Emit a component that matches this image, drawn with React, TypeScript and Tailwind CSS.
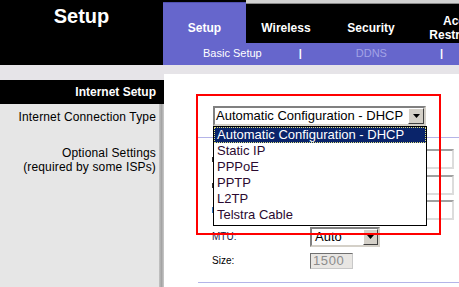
import React from 'react';

const options = ['Automatic Configuration - DHCP', 'Static IP', 'PPPoE', 'PPTP', 'L2TP', 'Telstra Cable'];

function DropArrow({ w = 'w-[16px]' }: { w?: string }) {
  return (
    <div className={`flex ${w} h-full shrink-0 items-center justify-center bg-[#d4d0c8] border border-t-white border-l-white border-r-[#404040] border-b-[#404040]`}>
      <svg width="7" height="4" viewBox="0 0 7 4">
        <path d="M0 0h7L3.5 4z" fill="#000" />
      </svg>
    </div>
  );
}

function TextBox({ className = '' }: { className?: string }) {
  return (
    <div className={`h-[20px] border-2 border-t-[#a0a0a0] border-l-[#a0a0a0] border-r-[#dcdcdc] border-b-[#dcdcdc] bg-white ${className}`} />
  );
}

const App: React.FC = () => {
  return (
    <div className="flex h-[287px] w-[459px] flex-col overflow-hidden bg-[#e6e4e8] font-['Liberation_Sans',Arial,sans-serif]">
      {/* Header */}
      <div className="flex h-[65px] shrink-0 bg-black">
        <div className="w-[163px] shrink-0 pt-[4px] text-center text-[20px] font-bold leading-[24px] text-white">
          Setup
        </div>
        <div className="flex flex-1 flex-col">
          <div className="flex h-[43px]">
            {/* active tab */}
            <div className="w-[83px] shrink-0 pt-[2px]">
              <div className="h-full border-t border-[#5050b0] bg-[#6666cc] pt-[18px] text-center text-[12px] font-bold leading-[14px] text-white">
                Setup
              </div>
            </div>
            <div className="flex flex-1 flex-col">
              <div className="h-[3px] bg-[#d2d2d2]" />
              <div className="h-px bg-[#8a8a8a]" />
              <div className="flex flex-1 text-[12px] font-bold leading-[14px] text-white">
                <div className="w-[80px] shrink-0 pt-[17px] text-center">Wireless</div>
                <div className="w-[90px] shrink-0 pt-[17px] text-center">Security</div>
                <div className="w-[96px] shrink-0 pt-[10px] text-center">Access Restrictions</div>
              </div>
            </div>
          </div>
          <div className="flex h-[22px] items-center bg-[#6666cc] pb-[2px] text-[11px] leading-[14px]">
            <span className="ml-[40px] text-white">Basic Setup</span>
            <span className="ml-[37px] font-bold text-white">|</span>
            <span className="ml-[54px] text-[#a3a3e6]">DDNS</span>
            <span className="ml-[53px] font-bold text-white">|</span>
          </div>
        </div>
      </div>

      {/* Body */}
      <div className="flex flex-1">
        {/* Left column */}
        <div className="mt-[15px] flex w-[164px] shrink-0 flex-col">
          <div className="flex h-[24px] items-center justify-end bg-black pr-[8px] text-[12px] font-bold text-white">
            Internet Setup
          </div>
          <div className="flex flex-1">
            <div className="flex w-[159px] flex-col items-end bg-[#e6e6e6] pr-[3px] text-right text-[12px] leading-[14px] tracking-[0.15px] text-black">
              <div className="pt-[6px]">Internet Connection Type</div>
              <div className="mt-[22px]">Optional Settings</div>
              <div>(required by some ISPs)</div>
            </div>
            <div className="w-[5px] bg-linear-to-r from-[#c4c4c4] via-[#a4a4a4] to-[#cacaca]" />
          </div>
        </div>

        {/* Right content */}
        <div className="relative mt-[9px] flex-1 bg-white pl-[34px] pt-[32px]">
          <div className="relative ml-[15px] w-[213px]">
            <div className="flex h-[20px] border-2 border-t-[#808080] border-l-[#808080] border-r-[#d4d0c8] border-b-[#d4d0c8] bg-white">
              <div className="flex-1 pl-[1px] text-[13px] leading-[16px] text-black">
                Automatic Configuration - DHCP
              </div>
              <DropArrow />
            </div>
            {/* open list */}
            <div className="absolute left-0 top-[20px] z-10 w-[214px] border border-black bg-white pb-[2px] text-[13px] leading-[14px] text-[#2b0a30]">
              {options.map((o, i) => (
                <div
                  key={o}
                  className={
                    i === 0
                      ? 'h-[16px] border border-dotted border-[#e0e080] bg-[#0a246a] pl-[2px] text-white'
                      : 'h-[16px] pl-[3px] pt-[1px]'
                  }
                >
                  {o}
                </div>
              ))}
            </div>
          </div>

          <div className="mt-[11px] h-px bg-[#b4b4e8]" />

          <div className="text-[10px] leading-[12px] text-black">
            {/* rows hidden under the open list */}
            <div className="mt-[11px] flex items-center">
              <div className="ml-[14px] w-[98px]">
                <div className="h-[5px] w-[2px] bg-[#333]" />
              </div>
              <TextBox className="w-[144px]" />
            </div>
            <div className="mt-[6px] flex items-center">
              <div className="ml-[14px] w-[98px]">
                <div className="h-[5px] w-[2px] bg-[#333]" />
              </div>
              <TextBox className="w-[144px]" />
            </div>
            <div className="mt-[5px] flex items-center">
              <div className="ml-[14px] w-[98px]">
                <div className="h-[6px] w-[2px] bg-[#3a78c0]" />
              </div>
              <TextBox className="w-[144px]" />
            </div>
            <div className="mt-[7px] flex items-center">
              <div className="ml-[14px] w-[98px] text-[#1a1a40]">MTU:</div>
              <div className="flex h-[20px] w-[70px] border-2 border-t-[#808080] border-l-[#808080] border-r-[#d4d0c8] border-b-[#d4d0c8] bg-white">
                <div className="flex-1 pl-[3px] text-[13px] leading-[16px]">Auto</div>
                <DropArrow w="w-[15px]" />
              </div>
            </div>
            <div className="mt-[6px] flex items-center">
              <div className="ml-[14px] w-[98px]">Size:</div>
              <div className="h-[16px] w-[43px] border border-t-[#707070] border-l-[#707070] border-r-[#c8c8c8] border-b-[#c8c8c8] bg-[#e8e6e3] pl-[2px] text-[13px] leading-[14px] tracking-[0.6px] text-[#8c8c8c]">
                1500
              </div>
            </div>
          </div>

          <div className="mt-[13px] h-px bg-[#b4b4e8]" />

          {/* annotation box */}
          <div className="pointer-events-none absolute left-[32px] top-[20px] z-20 h-[141px] w-[245px] border-2 border-[#ff0000]" />
        </div>
      </div>
    </div>
  );
};

export default App;
